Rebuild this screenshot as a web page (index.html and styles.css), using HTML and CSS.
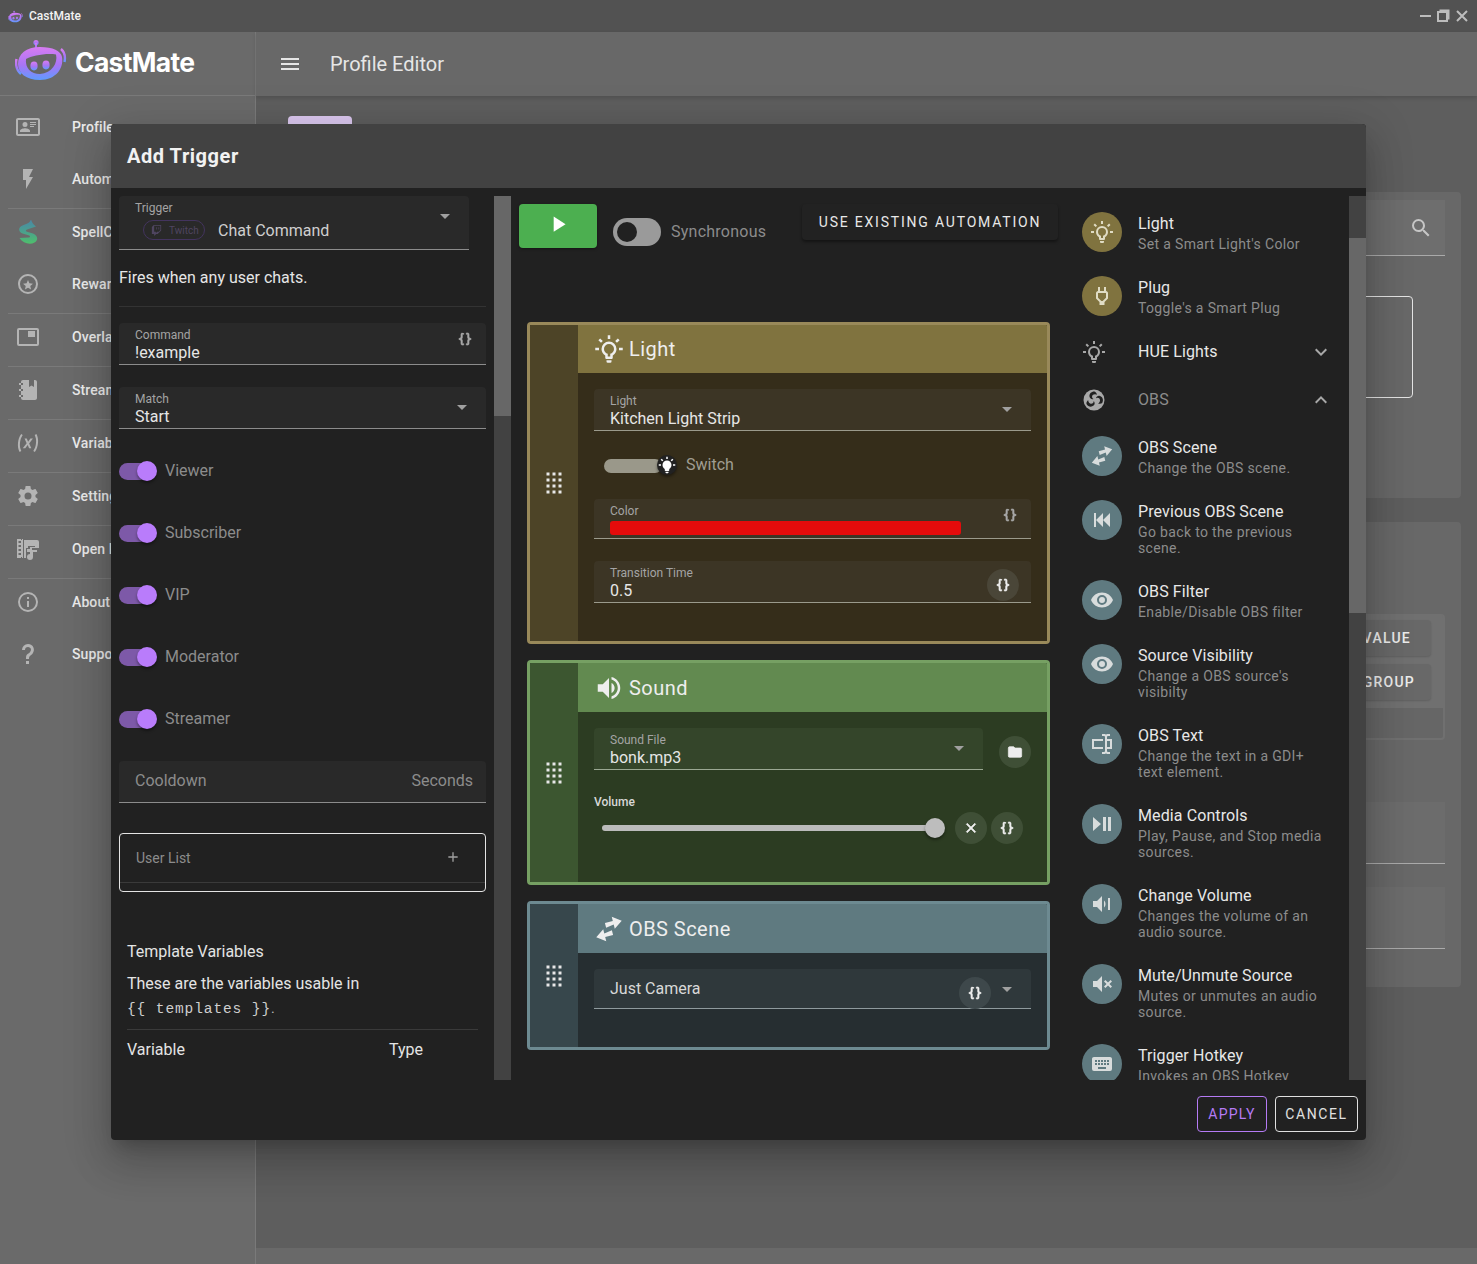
FILE: index.html
```html
<!DOCTYPE html>
<html lang="en">
<head>
    <meta charset="UTF-8">
    <meta name="viewport" content="width=device-width, initial-scale=1.0">
    <title>CastMate</title>
    <link rel="stylesheet" href="styles.css">
</head>
<body>
    <svg class="sprite" xmlns="http://www.w3.org/2000/svg">
        <defs>
            <linearGradient id="botGrad" x1="0" y1="0" x2="0" y2="1">
                <stop offset="0" stop-color="#d77cf2"/>
                <stop offset="0.55" stop-color="#a875f5"/>
                <stop offset="1" stop-color="#5f9bff"/>
            </linearGradient>
            <linearGradient id="spellGrad" x1="0" y1="0" x2="0" y2="1">
                <stop offset="0" stop-color="#4a86a8"/>
                <stop offset="0.5" stop-color="#4aa08e"/>
                <stop offset="1" stop-color="#4fbf6c"/>
            </linearGradient>
        </defs>
        <symbol id="i-card" viewBox="0 0 24 24"><path d="M22,3H2C0.9,3 0,3.9 0,5V19C0,20.1 0.9,21 2,21H22C23.1,21 24,20.1 24,19V5C24,3.9 23.1,3 22,3M22,19H2V5H22V19M14,17V15.75C14,14.09 10.66,13.25 9,13.25C7.34,13.25 4,14.09 4,15.75V17H14M9,7A2.5,2.5 0 0,0 6.5,9.5A2.5,2.5 0 0,0 9,12A2.5,2.5 0 0,0 11.5,9.5A2.5,2.5 0 0,0 9,7M14,7V8H20V7H14M14,9V10H20V9H14M14,11V12H18V11H14"/></symbol>
        <symbol id="i-flash" viewBox="0 0 24 24"><path d="M7,2V13H10V22L17,10H13L17,2H7Z"/></symbol>
        <symbol id="i-star" viewBox="0 0 24 24"><path d="M12,2C6.47,2 2,6.5 2,12A10,10 0 0,0 12,22A10,10 0 0,0 22,12A10,10 0 0,0 12,2M12,20A8,8 0 0,1 4,12A8,8 0 0,1 12,4A8,8 0 0,1 20,12A8,8 0 0,1 12,20M15.08,17.5L12,15.69L8.93,17.5L9.74,14.02L7.03,11.67L10.6,11.37L12,8.08L13.38,11.36L16.95,11.66L14.25,14.01L15.08,17.5Z"/></symbol>
        <symbol id="i-overlay" viewBox="0 0 24 24"><path d="M21,3H3A2,2 0 0,0 1,5V19A2,2 0 0,0 3,21H21A2,2 0 0,0 23,19V5A2,2 0 0,0 21,3M21,19H3V5H21V19M19,6H12V12H19V6Z"/></symbol>
        <symbol id="i-notebook" viewBox="0 0 24 24"><path d="M3,7V5H5V4C5,2.89 5.9,2 7,2H13V9L15.5,7.5L18,9V2H19C20.05,2 21,2.95 21,4V20C21,21.05 20.05,22 19,22H7C5.95,22 5,21.05 5,20V19H3V17H5V13H3V11H5V7H3M5,5V7H7V5H5M5,19H7V17H5V19M5,13H7V11H5V13Z"/></symbol>
        <symbol id="i-variable" viewBox="0 0 24 24"><path d="M20.41,3C21.8,5.71 22.35,8.84 22,12C21.8,15.16 20.7,18.29 18.83,21L17.3,20C18.91,17.57 19.85,14.8 20,12C20.34,9.2 19.89,6.43 18.7,4L20.41,3M5.17,3L6.7,4C5.09,6.43 4.15,9.2 4,12C3.66,14.8 4.12,17.57 5.3,20L3.61,21C2.21,18.29 1.65,15.17 2,12C2.2,8.84 3.3,5.71 5.17,3M12.08,10.68L14.4,7.45H16.93L13.15,12.45L15.35,17.37H13.09L11.71,14L9.28,17.33H6.76L10.66,12.21L8.53,7.45H10.8L12.08,10.68Z"/></symbol>
        <symbol id="i-cog" viewBox="0 0 24 24"><path d="M12,15.5A3.5,3.5 0 0,1 8.5,12A3.5,3.5 0 0,1 12,8.5A3.5,3.5 0 0,1 15.5,12A3.5,3.5 0 0,1 12,15.5M19.43,12.97C19.47,12.65 19.5,12.33 19.5,12C19.5,11.67 19.47,11.34 19.43,11L21.54,9.37C21.73,9.22 21.78,8.95 21.66,8.73L19.66,5.27C19.54,5.05 19.27,4.96 19.05,5.05L16.56,6.05C16.04,5.66 15.5,5.32 14.87,5.07L14.5,2.42C14.46,2.18 14.25,2 14,2H10C9.75,2 9.54,2.18 9.5,2.42L9.13,5.07C8.5,5.32 7.96,5.66 7.44,6.05L4.95,5.05C4.73,4.96 4.46,5.05 4.34,5.27L2.34,8.73C2.21,8.95 2.27,9.22 2.46,9.37L4.57,11C4.53,11.34 4.5,11.67 4.5,12C4.5,12.33 4.53,12.65 4.57,12.97L2.46,14.63C2.27,14.78 2.21,15.05 2.34,15.27L4.34,18.73C4.46,18.95 4.73,19.03 4.95,18.95L7.44,17.94C7.96,18.34 8.5,18.68 9.13,18.93L9.5,21.58C9.54,21.82 9.75,22 10,22H14C14.25,22 14.46,21.82 14.5,21.58L14.87,18.93C15.5,18.67 16.04,18.34 16.56,17.94L19.05,18.95C19.27,19.03 19.54,18.95 19.66,18.73L21.66,15.27C21.78,15.05 21.73,14.78 21.54,14.63L19.43,12.97Z"/></symbol>
        <symbol id="i-media" viewBox="0 0 24 24"><path d="M1,2H5V3H6V2H7V21H6V20H5V21H1V2M2.5,4V6H5V4H2.5M2.5,8V10H5V8H2.5M2.5,12V14H5V12H2.5M2.5,16V18H5V16H2.5M8,3H21A2,2 0 0,1 23,5V11H16V13H21V15H17V20A3,3 0 0,1 14,23A3,3 0 0,1 11,20A3,3 0 0,1 14,17V15H11V12H14V10H19V9H12V11H10V21H8V3Z"/></symbol>
        <symbol id="i-info" viewBox="0 0 24 24"><path d="M11,9H13V7H11M12,20C7.59,20 4,16.41 4,12C4,7.59 7.59,4 12,4C16.41,4 20,7.59 20,12C20,16.41 16.41,20 12,20M12,2A10,10 0 0,0 2,12A10,10 0 0,0 12,22A10,10 0 0,0 22,12A10,10 0 0,0 12,2M11,17H13V11H11V17Z"/></symbol>
        <symbol id="i-help" viewBox="0 0 24 24"><path d="M10,19H13V22H10V19M12,2C17.35,2.22 19.68,7.62 16.5,11.67C15.67,12.67 14.33,13.33 13.67,14.17C13,15 13,16 13,17H10C10,15.33 10,13.92 10.67,12.92C11.33,11.92 12.67,11.33 13.5,10.67C15.92,8.43 15.32,5.26 12,5A3,3 0 0,0 9,8H6A6,6 0 0,1 12,2Z"/></symbol>
        <symbol id="i-menu" viewBox="0 0 24 24"><path d="M3,6H21V8H3V6M3,11H21V13H3V11M3,16H21V18H3V16Z"/></symbol>
        <symbol id="i-magnify" viewBox="0 0 24 24"><path d="M9.5,3A6.5,6.5 0 0,1 16,9.5C16,11.11 15.41,12.59 14.44,13.73L14.71,14H15.5L20.5,19L19,20.5L14,15.5V14.71L13.73,14.44C12.59,15.41 11.11,16 9.5,16A6.5,6.5 0 0,1 3,9.5A6.5,6.5 0 0,1 9.5,3M9.5,5C7,5 5,7 5,9.5C5,12 7,14 9.5,14C12,14 14,12 14,9.5C14,7 12,5 9.5,5Z"/></symbol>
        <symbol id="i-down" viewBox="0 0 24 24"><path d="M7,10L12,15L17,10H7Z"/></symbol>
        <symbol id="i-braces" viewBox="0 0 24 24"><path d="M8,3A2,2 0 0,0 6,5V9A2,2 0 0,1 4,11H3V13H4A2,2 0 0,1 6,15V19A2,2 0 0,0 8,21H10V19H8V14A2,2 0 0,0 6,12A2,2 0 0,0 8,10V5H10V3M16,3A2,2 0 0,1 18,5V9A2,2 0 0,0 20,11H21V13H20A2,2 0 0,0 18,15V19A2,2 0 0,1 16,21H14V19H16V14A2,2 0 0,1 18,12A2,2 0 0,1 16,10V5H14V3H16Z"/></symbol>
        <symbol id="i-twitch" viewBox="0 0 24 24"><path d="M11.64 5.93H13.07V10.21H11.64M15.57 5.93H17V10.21H15.57M7 2L3.43 5.57V18.43H7.71V22L11.29 18.43H14.14L20.57 12V2M19.14 11.29L16.29 14.14H13.43L10.93 16.64V14.14H7.71V3.43H19.14Z"/></symbol>
        <symbol id="i-plus" viewBox="0 0 24 24"><path d="M19,13H13V19H11V13H5V11H11V5H13V11H19V13Z"/></symbol>
        <symbol id="i-play" viewBox="0 0 24 24"><path d="M8,5.14V19.14L19,12.14L8,5.14Z"/></symbol>
        <symbol id="i-bulb" viewBox="0 0 24 24"><path d="M20,11H23V13H20V11M1,11H4V13H1V11M13,1V4H11V1H13M4.92,3.5L7.05,5.64L5.63,7.05L3.5,4.93L4.92,3.5M16.95,5.63L19.07,3.5L20.5,4.93L18.37,7.05L16.95,5.63M12,6A6,6 0 0,1 18,12C18,14.22 16.79,16.16 15,17.2V19A1,1 0 0,1 14,20H10A1,1 0 0,1 9,19V17.2C7.21,16.16 6,14.22 6,12A6,6 0 0,1 12,6M14,21V22A1,1 0 0,1 13,23H11A1,1 0 0,1 10,22V21H14M11,18H13V15.87C14.73,15.43 16,13.86 16,12A4,4 0 0,0 12,8A4,4 0 0,0 8,12C8,13.86 9.27,15.43 11,15.87V18Z"/></symbol>
        <symbol id="i-bulb-on" viewBox="0 0 24 24"><path d="M12,6A6,6 0 0,1 18,12C18,14.22 16.79,16.16 15,17.2V19A1,1 0 0,1 14,20H10A1,1 0 0,1 9,19V17.2C7.21,16.16 6,14.22 6,12A6,6 0 0,1 12,6M14,21V22A1,1 0 0,1 13,23H11A1,1 0 0,1 10,22V21H14M20,11H23V13H20V11M1,11H4V13H1V11M13,1V4H11V1H13M4.92,3.5L7.05,5.64L5.63,7.05L3.5,4.93L4.92,3.5M16.95,5.63L19.07,3.5L20.5,4.93L18.37,7.05L16.95,5.63Z"/></symbol>
        <symbol id="i-plug" viewBox="0 0 24 24"><path d="M16,7V3H14V7H10V3H8V7C7,7 6,8 6,9V14.5L9.5,18V21H14.5V18L18,14.5V9C18,8 17,7 16,7M16,13.67L12.67,17H11.33L8,13.67V9H16V13.67Z"/></symbol>
        <symbol id="i-sound" viewBox="0 0 24 24"><path d="M14,3.23V5.29C16.89,6.15 19,8.83 19,12C19,15.17 16.89,17.84 14,18.7V20.77C18,19.86 21,16.28 21,12C21,7.72 18,4.14 14,3.23M16.5,12C16.5,10.23 15.5,8.71 14,7.97V16C15.5,15.29 16.5,13.76 16.5,12M3,9V15H7L12,20V4L7,9H3Z"/></symbol>
        <symbol id="i-swap" viewBox="0 0 24 24"><path transform="rotate(-14 12 12)" d="M10,6.5H16.5V3L23.5,8L16.5,13V9.5L10,10.5V6.5M14,13.5V17.5L7.5,17.5V21L0.5,16L7.5,11V14.5L14,13.5Z"/></symbol>
        <symbol id="i-back" viewBox="0 0 24 24"><path d="M20,5V19L13,12M6,5V19H4V5M13,5V19L6,12"/></symbol>
        <symbol id="i-eye" viewBox="0 0 24 24"><path d="M12,9A3,3 0 0,0 9,12A3,3 0 0,0 12,15A3,3 0 0,0 15,12A3,3 0 0,0 12,9M12,17A5,5 0 0,1 7,12A5,5 0 0,1 12,7A5,5 0 0,1 17,12A5,5 0 0,1 12,17M12,4.5C7,4.5 2.73,7.61 1,12C2.73,16.39 7,19.5 12,19.5C17,19.5 21.27,16.39 23,12C21.27,7.61 17,4.5 12,4.5Z"/></symbol>
        <symbol id="i-textbox" viewBox="0 0 24 24"><path d="M17,7H22V17H17V19A1,1 0 0,0 18,20H20V22H17.5C16.95,22 16,21.55 16,21C16,21.55 15.05,22 14.5,22H12V20H14A1,1 0 0,0 15,19V5A1,1 0 0,0 14,4H12V2H14.5C15.05,2 16,2.45 16,3C16,2.45 16.95,2 17.5,2H20V4H18A1,1 0 0,0 17,5V7M2,7H13V9H4V15H13V17H2V7M20,15V9H17V15H20Z"/></symbol>
        <symbol id="i-playpause" viewBox="0 0 24 24"><path d="M3,5V19L11,12M13,19H16V5H13M18,5V19H21V5"/></symbol>
        <symbol id="i-volume" viewBox="0 0 24 24"><path d="M3,9V15H7L12,20V4L7,9H3M14,8.5C15,9.3 15.5,10.5 15.5,12C15.5,13.5 15,14.7 14,15.5V8.5M18,6H20V18H18V6Z"/></symbol>
        <symbol id="i-mute" viewBox="0 0 24 24"><path d="M3,9H7L12,4V20L7,15H3V9M16.59,12L14,9.41L15.41,8L18,10.59L20.59,8L22,9.41L19.41,12L22,14.59L20.59,16L18,13.41L15.41,16L14,14.59L16.59,12Z"/></symbol>
        <symbol id="i-keyboard" viewBox="0 0 24 24"><path d="M19,10H17V8H19M19,13H17V11H19M16,10H14V8H16M16,13H14V11H16M16,17H8V15H16M7,10H5V8H7M7,13H5V11H7M8,11H10V13H8M8,8H10V10H8M11,11H13V13H11M11,8H13V10H11M20,5H4C2.89,5 2,5.89 2,7V17A2,2 0 0,0 4,19H20A2,2 0 0,0 22,17V7C22,5.89 21.1,5 20,5Z"/></symbol>
        <symbol id="i-chev-down" viewBox="0 0 24 24"><path d="M7.41,8.58L12,13.17L16.59,8.58L18,10L12,16L6,10L7.41,8.58Z"/></symbol>
        <symbol id="i-chev-up" viewBox="0 0 24 24"><path d="M7.41,15.41L12,10.83L16.59,15.41L18,14L12,8L6,14L7.41,15.41Z"/></symbol>
        <symbol id="i-drag" viewBox="0 0 24 24"><path d="M7,19V17H9V19H7M11,19V17H13V19H11M15,19V17H17V19H15M7,15V13H9V15H7M11,15V13H13V15H11M15,15V13H17V15H15M7,11V9H9V11H7M11,11V9H13V11H11M15,11V9H17V11H15M7,7V5H9V7H7M11,7V5H13V7H11M15,7V5H17V7H15Z"/></symbol>
        <symbol id="i-folder" viewBox="0 0 24 24"><path d="M10,4H4C2.89,4 2,4.89 2,6V18A2,2 0 0,0 4,20H20A2,2 0 0,0 22,18V8C22,6.89 21.1,6 20,6H12L10,4Z"/></symbol>
        <symbol id="i-close" viewBox="0 0 24 24"><path d="M19,6.41L17.59,5L12,10.59L6.41,5L5,6.41L10.59,12L5,17.59L6.41,19L12,13.41L17.59,19L19,17.59L13.41,12L19,6.41Z"/></symbol>
        <symbol id="i-obs" viewBox="0 0 24 24">
            <circle cx="12" cy="12" r="10.5"/>
            <path class="obs-swirl" d="M12.5,3.5C9,3.5 7,6 7.5,8.8C8,11 10,11.5 11.5,11C9.8,10.3 9.5,8 11,6.8C12,6 14,6 15,6.8C14.5,5 13.8,4 12.5,3.5Z"/>
            <path class="obs-swirl" d="M4.5,16C6.2,19 9.5,19.4 11.6,17.6C13.2,16.2 12.8,14.2 11.7,13C11.9,14.9 10,16.2 8.2,15.5C7,15 6,13.4 6.2,12C4.8,13.3 4.2,14.6 4.5,16Z"/>
            <path class="obs-swirl" d="M20.2,15C21.9,12 20.6,8.9 18,8C16,7.3 14.4,8.7 14,10.3C15.5,9.1 17.7,10 18,12C18.2,13.3 17.3,15 16,15.5C17.8,16 19.2,15.9 20.2,15Z"/>
        </symbol>
        <symbol id="i-bot" viewBox="0 0 52 42">
            <circle cx="21" cy="3.5" r="2.6" fill="url(#botGrad)"/>
            <rect x="20" y="4" width="2" height="7" fill="url(#botGrad)"/>
            <path fill="url(#botGrad)" d="M3,25C3,15 11,8 25,8C38,8 46,12 47,18C49,29 41,41 25,41C11,41 3,34 3,25Z"/>
            <path fill="#666" d="M11,20C17,17 30,14 41,15.5C43,24 37,34 25,35C16,35 10,29 11,20Z"/>
            <ellipse cx="19" cy="27" rx="3.6" ry="4.4" fill="url(#botGrad)"/>
            <ellipse cx="31" cy="26" rx="3.6" ry="4.4" fill="url(#botGrad)"/>
            <path fill="none" stroke="url(#botGrad)" stroke-width="2.4" d="M1.5,20C0.5,25 1.5,31 6,35"/>
            <path fill="none" stroke="url(#botGrad)" stroke-width="2.4" d="M46,10C49.5,13 50.5,18 49.5,23"/>
        </symbol>
        <symbol id="i-spell" viewBox="0 0 24 24"><path fill="url(#spellGrad)" d="M15,-1C15.5,2 17,4.5 20,6.5L11,9.5C9.5,10.2 9.5,11.3 11,11.8L17,13.5C22,15.5 22.5,20 18.5,22.5C14,25 7,23.5 3.5,18L12.5,17.5C14.5,17.2 14.5,15.8 12.5,15.2L6.5,13.5C2,11.5 2,7.5 6.5,5.5C10,4 14,3.5 15,-1Z"/></symbol>
    </svg>

    <header class="titlebar">
        <svg class="titlebar-logo"><use href="#i-bot"/></svg>
        <span class="titlebar-name">CastMate</span>
        <div class="window-controls">
            <span class="win-min"></span>
            <span class="win-restore"></span>
            <svg class="win-close" viewBox="0 0 12 12"><path d="M1,1L11,11M11,1L1,11"/></svg>
        </div>
    </header>

    <div class="app">
        <aside class="sidebar">
            <div class="brand">
                <svg class="brand-logo"><use href="#i-bot"/></svg>
                <span class="brand-name">CastMate</span>
            </div>
            <nav class="nav">
                <a class="nav-row"><svg class="nav-icon"><use href="#i-card"/></svg>Profiles</a>
                <a class="nav-row"><svg class="nav-icon"><use href="#i-flash"/></svg>Automations</a>
                <hr class="nav-line">
                <a class="nav-row"><svg class="nav-icon"><use href="#i-spell"/></svg>SpellCast</a>
                <a class="nav-row"><svg class="nav-icon"><use href="#i-star"/></svg>Rewards</a>
                <hr class="nav-line">
                <a class="nav-row"><svg class="nav-icon"><use href="#i-overlay"/></svg>Overlays</a>
                <hr class="nav-line">
                <a class="nav-row"><svg class="nav-icon"><use href="#i-notebook"/></svg>Stream Plan</a>
                <hr class="nav-line">
                <a class="nav-row"><svg class="nav-icon"><use href="#i-variable"/></svg>Variables</a>
                <hr class="nav-line">
                <a class="nav-row"><svg class="nav-icon"><use href="#i-cog"/></svg>Settings</a>
                <hr class="nav-line">
                <a class="nav-row"><svg class="nav-icon"><use href="#i-media"/></svg>Open Media</a>
                <hr class="nav-line">
                <a class="nav-row"><svg class="nav-icon"><use href="#i-info"/></svg>About</a>
                <a class="nav-row"><svg class="nav-icon"><use href="#i-help"/></svg>Support</a>
            </nav>
        </aside>

        <main class="main">
            <div class="main-bar">
                <svg class="main-menu"><use href="#i-menu"/></svg>
                <h1 class="main-title">Profile Editor</h1>
            </div>
            <div class="page">
                <div class="page-tab"></div>
                <section class="bg-card bg-card-top">
                    <div class="bg-search"><svg class="bg-search-icon"><use href="#i-magnify"/></svg></div>
                    <div class="bg-outline"></div>
                </section>
                <section class="bg-card bg-card-bottom">
                    <div class="bg-panel">
                        <span class="bg-btn">ADD VALUE</span>
                        <span class="bg-btn">ADD GROUP</span>
                        <div class="bg-panel-foot"></div>
                    </div>
                    <div class="bg-field"></div>
                    <div class="bg-field"></div>
                </section>
            </div>
            <div class="main-foot"></div>
        </main>
    </div>

    <div class="modal">
        <div class="modal-head">Add Trigger</div>
        <div class="modal-body">
            <div class="col-left">
                <div class="field field-trigger">
                    <span class="field-label">Trigger</span>
                    <div class="trigger-value">
                        <span class="chip"><svg class="chip-icon"><use href="#i-twitch"/></svg>Twitch</span>
                        <span>Chat Command</span>
                    </div>
                    <svg class="arrow"><use href="#i-down"/></svg>
                </div>
                <p class="trigger-desc">Fires when any user chats.</p>
                <div class="field field-cmd">
                    <span class="field-label">Command</span>
                    <span class="field-value">!example</span>
                    <svg class="braces"><use href="#i-braces"/></svg>
                </div>
                <div class="field field-match">
                    <span class="field-label">Match</span>
                    <span class="field-value">Start</span>
                    <svg class="arrow"><use href="#i-down"/></svg>
                </div>
                <div class="switches">
                    <div class="switch-row"><span class="switch"></span>Viewer</div>
                    <div class="switch-row"><span class="switch"></span>Subscriber</div>
                    <div class="switch-row"><span class="switch"></span>VIP</div>
                    <div class="switch-row"><span class="switch"></span>Moderator</div>
                    <div class="switch-row"><span class="switch"></span>Streamer</div>
                </div>
                <div class="field field-cooldown"><span>Cooldown</span><span>Seconds</span></div>
                <div class="user-list">
                    <div class="user-list-row"><span>User List</span><svg class="user-list-add"><use href="#i-plus"/></svg></div>
                </div>
                <div class="template-vars">
                    <h3>Template Variables</h3>
                    <p>These are the variables usable in</p>
                    <p class="template-code"><code>{{ templates }}</code>.</p>
                    <div class="var-head"><span>Variable</span><span>Type</span></div>
                </div>
            </div>
            <div class="scroll"><div class="scroll-thumb thumb-left"></div></div>

            <div class="col-center">
                <div class="seq-top">
                    <button class="btn-play"><svg><use href="#i-play"/></svg></button>
                    <div class="sync">
                        <span class="sync-switch"></span>
                        <span>Synchronous</span>
                    </div>
                    <button class="btn-existing">USE EXISTING AUTOMATION</button>
                </div>

                <div class="action action-light">
                    <div class="action-grip"><svg><use href="#i-drag"/></svg></div>
                    <div class="action-main">
                        <div class="action-head"><svg><use href="#i-bulb"/></svg>Light</div>
                        <div class="action-body">
                            <div class="field afield">
                                <span class="field-label">Light</span>
                                <span class="field-value">Kitchen Light Strip</span>
                                <svg class="arrow"><use href="#i-down"/></svg>
                            </div>
                            <div class="light-switch">
                                <span class="light-track"></span>
                                <span class="light-thumb"><svg><use href="#i-bulb-on"/></svg></span>
                                <span class="light-label">Switch</span>
                            </div>
                            <div class="field afield afield-color">
                                <span class="field-label">Color</span>
                                <span class="color-bar"></span>
                                <svg class="braces"><use href="#i-braces"/></svg>
                            </div>
                            <div class="field afield afield-time">
                                <span class="field-label">Transition Time</span>
                                <span class="field-value">0.5</span>
                                <span class="round-btn round-in"><svg><use href="#i-braces"/></svg></span>
                            </div>
                        </div>
                    </div>
                </div>

                <div class="action action-sound">
                    <div class="action-grip"><svg><use href="#i-drag"/></svg></div>
                    <div class="action-main">
                        <div class="action-head"><svg><use href="#i-sound"/></svg>Sound</div>
                        <div class="action-body">
                            <div class="sound-row">
                                <div class="field afield">
                                    <span class="field-label">Sound File</span>
                                    <span class="field-value">bonk.mp3</span>
                                    <svg class="arrow"><use href="#i-down"/></svg>
                                </div>
                                <span class="round-btn"><svg><use href="#i-folder"/></svg></span>
                            </div>
                            <div class="volume-label">Volume</div>
                            <div class="volume-row">
                                <div class="slider"><span class="slider-thumb"></span></div>
                                <span class="round-btn"><svg><use href="#i-close"/></svg></span>
                                <span class="round-btn"><svg><use href="#i-braces"/></svg></span>
                            </div>
                        </div>
                    </div>
                </div>

                <div class="action action-obs">
                    <div class="action-grip"><svg><use href="#i-drag"/></svg></div>
                    <div class="action-main">
                        <div class="action-head"><svg><use href="#i-swap"/></svg>OBS Scene</div>
                        <div class="action-body">
                            <div class="field afield afield-scene">
                                <span class="field-value">Just Camera</span>
                                <span class="round-btn round-scene"><svg><use href="#i-braces"/></svg></span>
                                <svg class="arrow"><use href="#i-down"/></svg>
                            </div>
                        </div>
                    </div>
                </div>
            </div>

            <div class="col-right">
                <div class="item">
                    <span class="avatar av-light"><svg><use href="#i-bulb"/></svg></span>
                    <div class="item-text"><div class="item-title">Light</div><div class="item-sub">Set a Smart Light's Color</div></div>
                </div>
                <div class="item">
                    <span class="avatar av-light"><svg><use href="#i-plug"/></svg></span>
                    <div class="item-text"><div class="item-title">Plug</div><div class="item-sub">Toggle's a Smart Plug</div></div>
                </div>
                <div class="group">
                    <svg class="group-icon"><use href="#i-bulb"/></svg>
                    <span class="group-name">HUE Lights</span>
                    <svg class="group-chev"><use href="#i-chev-down"/></svg>
                </div>
                <div class="group">
                    <svg class="group-icon"><use href="#i-obs"/></svg>
                    <span class="group-name group-open">OBS</span>
                    <svg class="group-chev"><use href="#i-chev-up"/></svg>
                </div>
                <div class="item">
                    <span class="avatar av-obs"><svg><use href="#i-swap"/></svg></span>
                    <div class="item-text"><div class="item-title">OBS Scene</div><div class="item-sub">Change the OBS scene.</div></div>
                </div>
                <div class="item">
                    <span class="avatar av-obs"><svg><use href="#i-back"/></svg></span>
                    <div class="item-text"><div class="item-title">Previous OBS Scene</div><div class="item-sub">Go back to the previous<br>scene.</div></div>
                </div>
                <div class="item">
                    <span class="avatar av-obs"><svg><use href="#i-eye"/></svg></span>
                    <div class="item-text"><div class="item-title">OBS Filter</div><div class="item-sub">Enable/Disable OBS filter</div></div>
                </div>
                <div class="item">
                    <span class="avatar av-obs"><svg><use href="#i-eye"/></svg></span>
                    <div class="item-text"><div class="item-title">Source Visibility</div><div class="item-sub">Change a OBS source's<br>visibilty</div></div>
                </div>
                <div class="item">
                    <span class="avatar av-obs"><svg><use href="#i-textbox"/></svg></span>
                    <div class="item-text"><div class="item-title">OBS Text</div><div class="item-sub">Change the text in a GDI+<br>text element.</div></div>
                </div>
                <div class="item">
                    <span class="avatar av-obs"><svg><use href="#i-playpause"/></svg></span>
                    <div class="item-text"><div class="item-title">Media Controls</div><div class="item-sub">Play, Pause, and Stop media<br>sources.</div></div>
                </div>
                <div class="item">
                    <span class="avatar av-obs"><svg><use href="#i-volume"/></svg></span>
                    <div class="item-text"><div class="item-title">Change Volume</div><div class="item-sub">Changes the volume of an<br>audio source.</div></div>
                </div>
                <div class="item">
                    <span class="avatar av-obs"><svg><use href="#i-mute"/></svg></span>
                    <div class="item-text"><div class="item-title">Mute/Unmute Source</div><div class="item-sub">Mutes or unmutes an audio<br>source.</div></div>
                </div>
                <div class="item">
                    <span class="avatar av-obs"><svg><use href="#i-keyboard"/></svg></span>
                    <div class="item-text"><div class="item-title">Trigger Hotkey</div><div class="item-sub">Invokes an OBS Hotkey</div></div>
                </div>
            </div>
            <div class="scroll"><div class="scroll-thumb thumb-right"></div></div>
        </div>
        <div class="modal-foot">
            <button class="btn-outline btn-apply">APPLY</button>
            <button class="btn-outline btn-cancel">CANCEL</button>
        </div>
    </div>
</body>
</html>
```

FILE: styles.css
```css
* {
    box-sizing: border-box;
}
html, body {
    margin: 0;
    height: 100%;
}
body {
    font-family: Roboto, 'Liberation Sans', sans-serif;
    background: #5e5e5e;
    color: #eee;
    overflow: hidden;
    position: relative;
}
svg {
    fill: currentColor;
    display: block;
}
.sprite {
    width: 0;
    height: 0;
    position: absolute;
}
.obs-swirl {
    fill: #212121;
}

/* title bar */
.titlebar {
    height: 32px;
    background: #525252;
    display: flex;
    align-items: center;
    padding: 0 9px 0 8px;
}
.titlebar-logo {
    width: 15px;
    height: 13px;
}
.titlebar-name {
    font-size: 12px;
    font-weight: 500;
    margin-left: 6px;
    color: #f2f2f2;
}
.window-controls {
    margin-left: auto;
    display: flex;
    align-items: center;
    color: #bdbdbd;
}
.win-min {
    width: 11px;
    height: 2px;
    background: #bdbdbd;
    margin-right: 6px;
}
.win-restore {
    width: 11px;
    height: 11px;
    border: 2px solid #bdbdbd;
    background: #525252;
    box-shadow: 2px -2px 0 -0.5px #bdbdbd;
    margin-right: 8px;
}
.win-close {
    width: 12px;
    height: 12px;
    fill: none;
    stroke: #bdbdbd;
    stroke-width: 2;
}

/* page behind the dialog */
.app {
    display: flex;
    height: 1232px;
}
.sidebar {
    width: 256px;
    flex: none;
    background: #6a6a6a;
    border-right: 1px solid #7a7a7a;
}
.brand {
    height: 64px;
    border-bottom: 1px solid #7a7a7a;
    display: flex;
    align-items: center;
    padding-left: 15px;
}
.brand-logo {
    width: 52px;
    height: 42px;
    margin-top: -8px;
}
.brand-name {
    font-family: Inter, Roboto, sans-serif;
    font-weight: 700;
    font-size: 26.5px;
    letter-spacing: -0.7px;
    margin-left: 8px;
    color: #fff;
    margin-top: -4px;
}
.nav {
    padding-top: 8px;
}
.nav-row {
    height: 52px;
    padding-bottom: 6px;
    display: flex;
    align-items: center;
    font-size: 14px;
    font-weight: 500;
    letter-spacing: 0.1px;
    color: #ececec;
    white-space: nowrap;
}
.nav-icon {
    width: 24px;
    height: 24px;
    margin: 0 32px 0 16px;
    color: #b4b4b4;
    flex: none;
}
.nav-line {
    border: 0;
    height: 1px;
    margin: 0 0 0 8px;
    background: #7a7a7a;
}
.main {
    flex: 1;
    min-width: 0;
    display: flex;
    flex-direction: column;
}
.main-bar {
    height: 64px;
    background: #686868;
    display: flex;
    align-items: center;
    padding-left: 22px;
    box-shadow: 0 2px 4px rgba(0, 0, 0, 0.15);
    color: #e6e6e6;
}
.main-menu {
    width: 24px;
    height: 24px;
}
.main-title {
    font-size: 20px;
    font-weight: 400;
    margin: 0 0 0 28px;
}
.page {
    flex: 1;
    padding: 20px 16px 0 32px;
}
.page-tab {
    width: 64px;
    height: 36px;
    background: #dcc8f0;
    border-radius: 4px;
}
.bg-card {
    background: #686868;
    border-radius: 4px;
    padding: 8px 16px;
}
.bg-card-top {
    height: 306px;
    margin-top: 40px;
}
.bg-search {
    height: 56px;
    background: #6e6e6e;
    border-bottom: 1px solid #aaa;
    display: flex;
    align-items: center;
    justify-content: flex-end;
    padding-right: 12px;
    color: #c6c6c6;
}
.bg-search-icon {
    width: 24px;
    height: 24px;
}
.bg-outline {
    height: 102px;
    margin: 40px 32px 0 0;
    border: 1px solid #e4e4e4;
    border-radius: 4px;
}
.bg-card-bottom {
    height: 465px;
    margin-top: 24px;
    padding-top: 92px;
}
.bg-panel {
    background: #707070;
    height: 126px;
    border-radius: 4px;
    padding: 6px 0 0 0;
    display: flex;
    flex-direction: column;
    align-items: flex-end;
    gap: 8px;
    overflow: hidden;
    border: 2px solid #707070;
    border-top: 0;
}
.bg-btn {
    width: 200px;
    height: 36px;
    background: #686868;
    border-radius: 4px;
    font-size: 14px;
    font-weight: 500;
    letter-spacing: 1.25px;
    color: #ececec;
    display: flex;
    align-items: center;
    justify-content: flex-end;
    padding-right: 20px;
    margin-right: 12px;
    box-shadow: 0 1px 2px rgba(0, 0, 0, 0.15);
}
.bg-btn + .bg-btn {
    padding-right: 16px;
}
.bg-panel-foot {
    width: 100%;
    flex: 1;
    background: #666;
}
.bg-field {
    height: 62px;
    background: #6c6c6c;
    border-bottom: 1px solid #aaa;
    margin-top: 62px;
}
.bg-field + .bg-field {
    margin-top: 23px;
}
.main-foot {
    height: 16px;
    background: #696969;
    margin-top: auto;
}

/* dialog */
.modal {
    position: absolute;
    left: 111px;
    top: 124px;
    width: 1255px;
    height: 1016px;
    background: #212121;
    border-radius: 4px;
    display: flex;
    flex-direction: column;
    overflow: hidden;
    box-shadow: 0 11px 15px -7px rgba(0, 0, 0, 0.2), 0 24px 38px 3px rgba(0, 0, 0, 0.14), 0 9px 46px 8px rgba(0, 0, 0, 0.12);
}
.modal-head {
    height: 64px;
    flex: none;
    background: #424242;
    padding-left: 16px;
    display: flex;
    align-items: center;
    font-size: 20px;
    font-weight: 700;
    letter-spacing: 0.55px;
    color: #f2f2f2;
}
.modal-body {
    height: 892px;
    padding-top: 8px;
    display: flex;
}
.modal-foot {
    flex: 1;
    display: flex;
    justify-content: flex-end;
    align-items: flex-start;
    gap: 8px;
    padding: 16px 8px 0 0;
}
.scroll {
    width: 17px;
    flex: none;
    background: #424242;
}
.scroll-thumb {
    background: #676767;
}
.thumb-left {
    height: 220px;
}
.thumb-right {
    height: 375px;
    margin-top: 42px;
}
.btn-outline {
    height: 36px;
    padding: 0;
    font: 400 14px Roboto, sans-serif;
    letter-spacing: 1.25px;
    background: transparent;
    color: #e0e0e0;
    border: 1px solid #e0e0e0;
    border-radius: 4px;
}
.btn-apply {
    width: 70px;
    color: #b57bf5;
    border-color: #b57bf5;
}
.btn-cancel {
    width: 83px;
    letter-spacing: 1.6px;
}

/* left column */
.col-left {
    width: 383px;
    flex: none;
    padding: 0 8px;
    overflow: hidden;
}
.field {
    position: relative;
    background: #292929;
    border-radius: 4px 4px 0 0;
    border-bottom: 1px solid #8c8c8c;
    padding: 6px 16px 0;
    height: 42px;
}
.field-label {
    display: block;
    font-size: 12px;
    line-height: 12px;
    color: #a4a4a4;
}
.field-value {
    display: block;
    font-size: 16px;
    line-height: 18px;
    margin-top: 3px;
    color: #e6e6e6;
}
.arrow {
    position: absolute;
    right: 12px;
    top: 8px;
    width: 24px;
    height: 24px;
    color: #a0a0a0;
}
.braces {
    position: absolute;
    right: 13px;
    top: 8px;
    width: 16px;
    height: 16px;
    color: #a8a8a8;
    stroke: currentColor;
    stroke-width: 1px;
}
.field-trigger {
    width: 350px;
    height: 54px;
    padding-top: 6px;
}
.field-trigger .arrow {
    right: 12px;
    top: 8px;
}
.trigger-value {
    display: flex;
    align-items: center;
    font-size: 16px;
    color: #cfcfcf;
    margin-top: 6px;
    margin-left: 8px;
}
.chip {
    display: flex;
    align-items: center;
    height: 20px;
    width: 62px;
    margin-right: 13px;
    padding-left: 6px;
    border: 1px solid #43345e;
    border-radius: 10px;
    font-size: 10px;
    color: #4f4560;
}
.chip-icon {
    width: 13px;
    height: 13px;
    margin-right: 6px;
}
.trigger-desc {
    margin: 0;
    height: 57px;
    padding-top: 18px;
    font-size: 16px;
    line-height: 20px;
    color: #e6e6e6;
    border-bottom: 1px solid #333;
}
.field-cmd {
    margin-top: 16px;
}
.field-match {
    margin-top: 22px;
}
.field-match .arrow {
    top: 8px;
}
.switches {
    padding-top: 11px;
}
.switch-row {
    height: 62px;
    display: flex;
    align-items: center;
    font-size: 16px;
    line-height: 18px;
    color: #8c8c8c;
    padding-bottom: 1px;
}
.switch {
    position: relative;
    width: 30px;
    height: 17px;
    background: #7d59a8;
    border-radius: 9px;
    margin: 1px 16px 0 0;
}
.switch::after {
    content: "";
    position: absolute;
    left: 18px;
    top: -2px;
    width: 20px;
    height: 20px;
    border-radius: 50%;
    background: #b97cfb;
    box-shadow: 0 2px 3px rgba(0, 0, 0, 0.4);
}
.field-cooldown {
    margin-top: 11px;
    padding: 0 13px 2px 16px;
    display: flex;
    align-items: center;
    justify-content: space-between;
    font-size: 16px;
    color: #8c8c8c;
}
.user-list {
    margin-top: 30px;
    height: 59px;
    border: 1px solid #e4e4e4;
    border-radius: 4px;
}
.user-list-row {
    height: 49px;
    padding: 0 24px 0 16px;
    border-bottom: 1px solid #3a3a3a;
    display: flex;
    align-items: center;
    justify-content: space-between;
    font-size: 14px;
    color: #8c8c8c;
}
.user-list-add {
    width: 16px;
    height: 16px;
    margin-bottom: 2px;
    color: #a0a0a0;
}
.template-vars {
    padding: 50px 8px 0;
    font-size: 16px;
    line-height: 20px;
    color: #e4e4e4;
}
.template-vars h3 {
    margin: 0;
    font-size: 16px;
    font-weight: 400;
}
.template-vars p {
    margin: 12px 0 0;
}
.template-vars .template-code {
    margin-top: 4px;
    font-size: 14px;
    color: #bbb;
}
.template-code code {
    font-family: 'Liberation Mono', monospace;
    font-size: 14.5px;
    letter-spacing: 0.9px;
    color: #cfcfcf;
}
.var-head {
    margin-top: 10px;
    padding-top: 10px;
    border-top: 1px solid #3a3a3a;
    display: flex;
}
.var-head span:first-child {
    width: 262px;
}

/* center column */
.col-center {
    width: 555px;
    flex: none;
    padding: 8px 8px 0;
    overflow: hidden;
}
.seq-top {
    display: flex;
    height: 118px;
}
.btn-play {
    width: 78px;
    height: 44px;
    background: #4caf50;
    border: 0;
    border-radius: 4px;
    color: #fff;
    display: flex;
    align-items: center;
    justify-content: center;
    padding: 0 0 4px;
    box-shadow: 0 1px 3px rgba(0, 0, 0, 0.4);
}
.btn-play svg {
    width: 26px;
    height: 26px;
}
.sync {
    display: flex;
    align-items: center;
    height: 28px;
    margin: 14px 0 0 16px;
    font-size: 16px;
    letter-spacing: 0.25px;
    color: #8c8c8c;
}
.sync > span:last-child {
    margin-top: -2px;
}
.sync-switch {
    position: relative;
    width: 48px;
    height: 28px;
    border-radius: 14px;
    background: #9a9a9a;
    margin-right: 10px;
}
.sync-switch::after {
    content: "";
    position: absolute;
    left: 4px;
    top: 4px;
    width: 20px;
    height: 20px;
    border-radius: 50%;
    background: #212121;
}
.btn-existing {
    margin-left: auto;
    width: 256px;
    height: 36px;
    background: #222;
    border: 0;
    border-radius: 4px;
    color: #e8e8e8;
    font: 400 14px Roboto, sans-serif;
    letter-spacing: 1.8px;
    box-shadow: 0 2px 3px rgba(0, 0, 0, 0.4);
}
.action {
    width: 523px;
    margin: 0 0 16px 8px;
    display: flex;
    border: 3px solid;
    border-radius: 4px;
    overflow: hidden;
}
.action-grip {
    width: 48px;
    flex: none;
    display: flex;
    align-items: center;
    justify-content: center;
    color: #e8e8e8;
}
.action-grip svg {
    width: 36px;
    height: 36px;
}
.action-main {
    flex: 1;
    min-width: 0;
}
.action-head {
    height: 48px;
    display: flex;
    align-items: center;
    padding-left: 16px;
    font-size: 20px;
    letter-spacing: 0.45px;
    color: #eee;
}
.action-head svg {
    width: 30px;
    height: 30px;
    margin-right: 5px;
}
.action-body {
    padding: 16px;
    padding-right: 16px;
}
.action-light {
    height: 322px;
    border-color: #99895a;
}
.action-light .action-grip { background: #4d4427; }
.action-light .action-head { background: #80733f; }
.action-light .action-body { background: #352d1a; height: 268px; }
.action-light .afield { background: #3c3525; border-color: #9b9a8c; }
.action-sound {
    height: 225px;
    border-color: #76a063;
}
.action-sound .action-grip { background: #3c5630; }
.action-sound .action-head { background: #628a50; height: 49px; }
.action-sound .action-body { background: #2c3c22; height: 170px; }
.action-sound .afield { background: #34452a; border-color: #9ba893; }
.action-obs {
    height: 149px;
    border-color: #6d8a91;
}
.action-obs .action-grip { background: #37474c; }
.action-obs .action-head { background: #5f7a80; height: 49px; }
.action-obs .action-body { background: #262e31; height: 94px; }
.action-obs .afield { background: #2f383b; border-color: #8f9a9d; }

.light-switch {
    position: relative;
    height: 68px;
    display: flex;
    align-items: center;
    padding-left: 10px;
}
.light-track {
    width: 58px;
    height: 14px;
    border-radius: 7px;
    background: #9a988a;
    margin-top: 1px;
}
.light-thumb {
    position: absolute;
    left: 63px;
    top: 24px;
    width: 20px;
    height: 20px;
    border-radius: 50%;
    background: #212121;
    color: #fff;
    display: flex;
    align-items: center;
    justify-content: center;
    box-shadow: 0 2px 3px rgba(0, 0, 0, 0.4);
}
.light-thumb svg {
    width: 18px;
    height: 18px;
}
.light-label {
    margin: -2px 0 0 24px;
    font-size: 16px;
    color: #a09d92;
}
.afield-color {
    height: 40px;
}
.color-bar {
    display: block;
    width: 351px;
    height: 14px;
    margin-top: 4px;
    background: #e50b0b;
    border-radius: 3px;
}
.afield-time {
    margin-top: 22px;
}
.round-btn {
    width: 32px;
    height: 32px;
    border-radius: 50%;
    background: #4a4638;
    color: #eee;
    flex: none;
    display: flex;
    align-items: center;
    justify-content: center;
}
.round-btn svg {
    width: 16px;
    height: 16px;
    stroke: currentColor;
    stroke-width: 1px;
}
.round-in {
    position: absolute;
    right: 12px;
    top: 8px;
}
.sound-row {
    display: flex;
    gap: 16px;
    align-items: flex-start;
}
.sound-row .afield {
    flex: 1;
    min-width: 0;
}
.sound-row .round-btn {
    margin-top: 8px;
}
.action-sound .round-btn {
    background: #3f4f36;
}
.volume-label {
    font-size: 12px;
    font-weight: 500;
    color: #d8d8d8;
    margin-top: 25px;
}
.volume-row {
    display: flex;
    align-items: center;
    margin-top: 3px;
    padding-left: 8px;
    gap: 4px;
}
.slider {
    position: relative;
    width: 333px;
    height: 6px;
    background: #bbb;
    border-radius: 3px;
    margin-right: 16px;
}
.slider-thumb {
    position: absolute;
    right: -10px;
    top: -7px;
    width: 20px;
    height: 20px;
    border-radius: 50%;
    background: #bdbdbd;
    box-shadow: 0 2px 3px rgba(0, 0, 0, 0.4);
}
.afield-scene {
    height: 40px;
    padding-top: 11px;
}
.afield-scene .field-value {
    margin: 0;
    color: #d8d8d8;
}
.afield-scene .arrow {
    top: 8px;
}
.round-scene {
    position: absolute;
    right: 40px;
    top: 8px;
    background: #3e484b;
}

/* right column */
.col-right {
    width: 283px;
    flex: none;
    padding-top: 4px;
    overflow: hidden;
}
.item {
    display: flex;
    padding: 12px 16px;
    min-height: 64px;
}
.avatar {
    width: 40px;
    height: 40px;
    border-radius: 50%;
    margin-right: 16px;
    flex: none;
    display: flex;
    align-items: center;
    justify-content: center;
    color: #d8dcdc;
}
.avatar svg {
    width: 24px;
    height: 24px;
}
.av-light {
    background: #80733f;
    color: #e0dcc4;
}
.av-obs {
    background: #5f7a80;
}
.item-text {
    flex: 1;
    min-width: 0;
    margin-top: 2px;
}
.item-title {
    font-size: 16px;
    line-height: 20px;
    letter-spacing: 0.1px;
    color: #e8e8e8;
}
.item-sub {
    font-size: 14px;
    line-height: 16px;
    letter-spacing: 0.35px;
    margin-top: 2px;
    color: #8c8c8c;
    white-space: nowrap;
}
.group {
    height: 48px;
    display: flex;
    align-items: center;
    padding: 0 16px;
}
.group-icon {
    width: 24px;
    height: 24px;
    margin-right: 32px;
    color: #a8a8a8;
}
.group-name {
    font-size: 16px;
    letter-spacing: 0.1px;
    margin-top: -2px;
    color: #e8e8e8;
}
.group-open {
    color: #8c8c8c;
}
.group-chev {
    width: 24px;
    height: 24px;
    margin-left: auto;
    color: #a8a8a8;
}
```
